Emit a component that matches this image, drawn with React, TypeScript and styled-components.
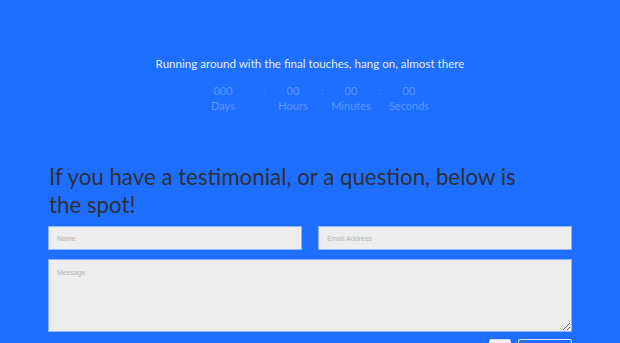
import styled, { createGlobalStyle } from 'styled-components';
import React from 'react';

const GlobalStyle = createGlobalStyle`
  html, body {
    margin: 0;
    padding: 0;
    background: #1e6fff;
  }
  * {
    box-sizing: border-box;
  }
`;

const Page = styled.div`
  min-height: 343px;
  background: #1e6fff;
  overflow: hidden;
`;

const Hero = styled.section`
  display: flex;
  flex-direction: column;
  align-items: center;
  padding-top: 55px;
`;

const Tagline = styled.p`
  margin: 0;
  font-family: Lato, sans-serif;
  font-size: 11.6px;
  line-height: 18px;
  color: rgba(255, 255, 255, 0.9);
`;

const Countdown = styled.div`
  display: flex;
  margin-top: 10px;
  font-family: Lato, sans-serif;
`;

type UnitProps = {
  wide?: boolean;
};

const Unit = styled.div<UnitProps>`
  width: ${(props) => (props.wide ? '68px' : '44px')};
  display: flex;
  flex-direction: column;
  align-items: center;
  color: rgba(255, 255, 255, 0.28);
`;

const Value = styled.span`
  font-size: 11px;
  line-height: 15px;
`;

const Label = styled.span`
  font-size: 11px;
  line-height: 15px;
`;

const Colon = styled.span`
  width: 14px;
  text-align: center;
  font-size: 10px;
  line-height: 15px;
  color: rgba(255, 255, 255, 0.22);
`;

const ContactSection = styled.section`
  width: 524px;
  margin: 50px auto 0;
`;

const Heading = styled.h2`
  max-width: 490px;
  margin: 0 0 0 1px;
  font-family: Lato, sans-serif;
  font-weight: 400;
  font-size: 22.3px;
  line-height: 28px;
  color: #2d3036;
`;

const Form = styled.form`
  display: flex;
  flex-direction: column;
  gap: 9px;
  margin-top: 7px;
`;

const FieldRow = styled.div`
  display: flex;
  gap: 16px;
`;

const TextInput = styled.input`
  flex: 1;
  min-width: 0;
  height: 24px;
  padding: 0 8px;
  border: 1px solid #8db4ff;
  background: #ededed;
  font-family: 'Liberation Sans', Arial, sans-serif;
  font-size: 7px;
  color: #444;
  outline: none;
  &::placeholder {
    color: #b5b5b5;
  }
`;

const MessageArea = styled.textarea`
  height: 73px;
  padding: 9px 8px;
  border: 1px solid #8db4ff;
  background: #ededed;
  font-family: 'Liberation Sans', Arial, sans-serif;
  font-size: 7px;
  color: #444;
  resize: vertical;
  outline: none;
  &::placeholder {
    color: #b5b5b5;
  }
`;

const Actions = styled.div`
  display: flex;
  justify-content: flex-end;
  gap: 7px;
  margin-top: -2px;
`;

const SmallBox = styled.button`
  width: 22px;
  height: 20px;
  border: 1px solid #d8d8d8;
  background: #f2f2f2;
  border-radius: 2px;
  padding: 0;
`;

const SendButton = styled.button`
  width: 54px;
  height: 20px;
  border: 1px solid rgba(255, 255, 255, 0.85);
  border-radius: 2px;
  background: transparent;
  color: #fff;
  font-family: Lato, sans-serif;
  font-size: 9px;
  padding: 0;
`;

const units = [
  { value: '000', label: 'Days', wide: true },
  { value: '00', label: 'Hours' },
  { value: '00', label: 'Minutes' },
  { value: '00', label: 'Seconds' },
];

const App = () => {
  return (
    <Page>
      <GlobalStyle />
      <Hero>
        <Tagline>Running around with the final touches, hang on, almost there</Tagline>
        <Countdown>
          {units.map((unit, i) => (
            <React.Fragment key={unit.label}>
              {i > 0 && <Colon>:</Colon>}
              <Unit wide={unit.wide}>
                <Value>{unit.value}</Value>
                <Label>{unit.label}</Label>
              </Unit>
            </React.Fragment>
          ))}
        </Countdown>
      </Hero>

      <ContactSection>
        <Heading>If you have a testimonial, or a question, below is the spot!</Heading>
        <Form onSubmit={(e) => e.preventDefault()}>
          <FieldRow>
            <TextInput placeholder="Name" />
            <TextInput placeholder="Email Address" />
          </FieldRow>
          <MessageArea placeholder="Message" />
          <Actions>
            <SmallBox type="button" />
            <SendButton type="submit">Send</SendButton>
          </Actions>
        </Form>
      </ContactSection>
    </Page>
  );
};

export default App;
